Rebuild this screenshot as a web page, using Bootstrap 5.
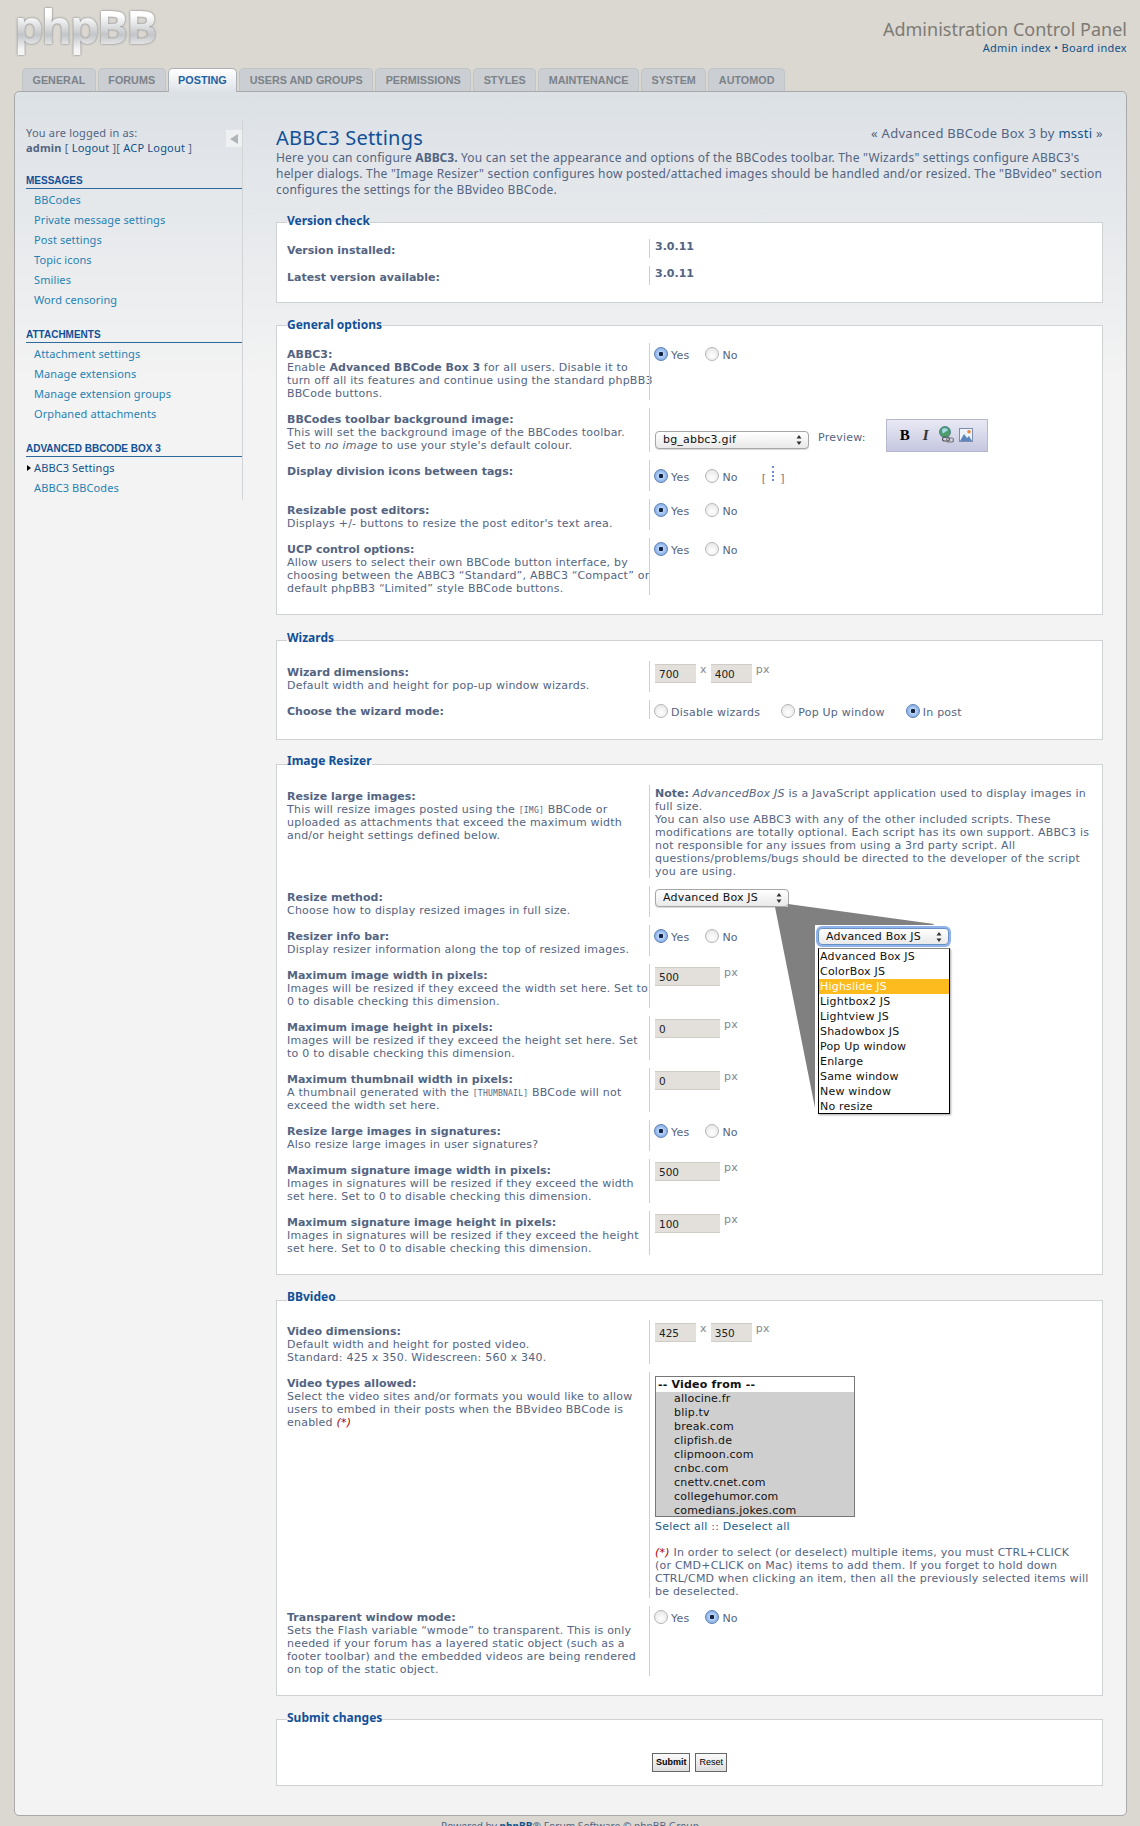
<!DOCTYPE html>
<html lang="en">
<head>
    <meta charset="UTF-8">
    <title>ABBC3 Settings</title>
    <link href="https://cdn.jsdelivr.net/npm/bootstrap@5.3.0/dist/css/bootstrap.min.css" rel="stylesheet">
    <style>
        html, body { height: 1826px; overflow: hidden; }
        body { position: relative; margin: 0; background: #dbd7d1; color: #536482; font: 11px/13px "Noto Sans", sans-serif; }
        a { color: #1f82b5; text-decoration: none; }

        /* header */
        .top-bar { height: 68px; padding: 0 13px 0 14px; }
        .logo-text { font: 700 47px/52px "Open Sans", sans-serif; letter-spacing: -2.5px; height: 60px; margin: 0; padding: 0 3px 8px 0; background: linear-gradient(#ffffff 25%, #c3c6c9 58%, #f4f4f4 82%); -webkit-background-clip: text; background-clip: text; color: transparent; filter: drop-shadow(0 0 1px #77797b); }
        .acp-title { font: 18px/22px "Noto Sans", sans-serif; color: #7d7b74; margin-top: 18px; }
        .acp-links { font-size: 11px; line-height: 15px; color: #105289; letter-spacing: .3px; }
        .acp-links a { color: #105289; }

        /* tabs */
        .acp-tabs { padding-left: 22px; height: 24px; gap: 2px; position: relative; z-index: 2; flex-wrap: nowrap; }
        .acp-tabs .nav-link { height: 23px; padding: 0 9.5px; font: 700 10.8px/23px "Liberation Sans", sans-serif; color: #7c8288; background: #cbcfd3; border: 1px solid #c0c4c7; border-bottom: 0; border-radius: 5px 5px 0 0; white-space: nowrap; }
        .acp-tabs .nav-link.active { height: 24px; background: #dde2e7; border-color: #aab0b5; color: #1d62a3; border-bottom: 0; background-image: linear-gradient(#fff, #dde2e7); }

        /* panel */
        .acp-panel { display: flex; height: 1725px; margin: -1px 13px 0 14px; background: linear-gradient(#dce1e6, #f3f3f3 290px); border: 1px solid #a9a9a9; border-radius: 5px; }
        .side-col { width: 228px; height: 380px; margin-top: 28px; padding: 0 0 0 11px; border-right: 1px solid #d2d4d6; position: relative; flex: none; }
        .side-who { margin-top: 5px; line-height: 15px; color: #536482; margin-bottom: 19px; letter-spacing: .2px; }
        .side-who b { font-weight: 700; }
        .side-who a { color: #105289; }
        .collapse-btn { position: absolute; right: 0; top: 10px; width: 16px; height: 17px; background: #eef0f2; display: flex; align-items: center; justify-content: center; }
        .collapse-btn i { border: 5px solid transparent; border-left: 0; border-right: 8px solid #aeb4ba; }
        .side-head { font: 700 10px/14px "Liberation Sans", sans-serif; color: #115098; text-transform: uppercase; border-bottom: 1px solid #2c6a9e; margin: 0; height: 15px; }
        .side-menu { margin: 0 0 18px; padding: 1px 0 0 0; letter-spacing: .1px; }
        .side-menu li { height: 20px; line-height: 20px; padding-left: 8px; position: relative; }
        .side-menu li.here a { color: #105289; }
        .side-menu li.here::before { content: ""; position: absolute; left: 1px; top: 7px; border: 3px solid transparent; border-left: 4px solid #000; border-right: 0; }

        .main-col { width: 827px; margin-left: 33px; flex: none; }
        .main-head { margin-top: 34px; height: 21px; }
        .main-head h1 { font: 20px/24px "Noto Sans", sans-serif; color: #115098; margin: 0; letter-spacing: .2px; }
        .main-head span { font-size: 13px; line-height: 14px; letter-spacing: .28px; }
        .main-head span a { color: #105289; }
        .main-intro { font-size: 12px; line-height: 16px; margin: 3px 0 0; white-space: nowrap; letter-spacing: .22px; }
        .main-intro b { font-weight: 700; letter-spacing: 0; }

        /* fieldsets */
        fieldset.opts { display: block; margin: 0; min-width: 0; background: #fff; border: 1px solid #cfd2d5; padding: 10px 10px 11px; font: 11px/13px "DejaVu Sans", sans-serif; letter-spacing: .22px; }
        fieldset.opts legend { float: none; width: auto; margin: 0; padding: 0; font: 700 12px/14px "Noto Sans", sans-serif; color: #115098; position: relative; top: -3px; letter-spacing: 0; }
        fieldset.opts legend + * { clear: none; }
        #fs-version { margin-top: 17px; padding-bottom: 9px; }
        #fs-version legend { top: -1px; }
        #fs-general { margin-top: 15px; padding-top: 11px; }
        #fs-general legend { top: 0; }
        #fs-wizard { margin-top: 18px; padding-top: 14px; padding-bottom: 12px; }
        #fs-wizard legend { top: -2px; }
        #fs-resizer { margin-top: 17px; padding-top: 14px; }
        #fs-video { margin-top: 18px; padding-top: 13px; }
        #fs-submit { margin-top: 16px; height: 74px; }
        #fs-submit legend { top: -1px; }

        .opt-row { display: flex; margin-bottom: 8px; }
        .opt-label { width: 362px; flex: none; padding-top: 5px; white-space: nowrap; }
        .opt-label b { font-weight: 700; letter-spacing: 0; }
        .opt-val { border-left: 1px solid #ccd0d4; padding: 3px 0 0 5px; flex: 1; min-width: 0; position: relative; white-space: nowrap; color: #536482; }
        .h-19 { min-height: 19px; }
        .h-31 { min-height: 31px; }
        .h-18 { min-height: 18px; }
        .h-93 { min-height: 93px; }
        .h-226 { min-height: 226px; }
        .ver-txt { font-weight: 700; padding-top: 1px; letter-spacing: 0; }
        .note-txt { padding-top: 2px; }
        .note-txt b { font-weight: 700; letter-spacing: 0; }
        .val-low { padding-top: 6px; }
        .mono-small { font: 8px "DejaVu Sans Mono", monospace; }
        .req { color: #aa0000; font-style: italic; }

        /* controls */
        .rb-set { display: flex; align-items: center; gap: 3px; }
        .rb-set label { margin: 0 14px 0 0; padding-top: 3px; }
        .rb-wide label { margin-right: 19px; }
        input.rb { appearance: none; -webkit-appearance: none; width: 14px; height: 14px; margin: 0 0 0 -1px; border-radius: 50%; border: 1px solid #b5b5b5; background: radial-gradient(circle at 50% 65%, #fff, #e2e2e2); flex: none; }
        input.rb:checked { border-color: #5d7fb5; background: radial-gradient(circle, #14233f 0 2px, #b9d3f5 2.5px, #7ba7e6 7px); }
        .mac-select { appearance: none; -webkit-appearance: none; display: block; height: 18px; padding: 0 0 0 7px; font: 11px/16px "DejaVu Sans", sans-serif; letter-spacing: .2px; color: #111; border: 1px solid #a6a6a6; border-radius: 4px; background-color: #fff; background-image: linear-gradient(#fff, #e9e9e9); box-shadow: 0 1px 1px rgba(0,0,0,.15); }
        .mac-arrows { position: absolute; right: 7px; top: 4px; width: 6px; height: 10px; pointer-events: none; }
        .sel-wrap { position: relative; display: inline-block; }
        .sel-abbc { width: 154px; }
        .sel-box { width: 134px; }
        .txt-in { height: 19px; background: #e3e0db; border: 0; border-top: 1px solid #cfccc6; border-bottom: 1px solid #cfccc6; font: 10.5px/17px "DejaVu Sans", sans-serif; color: #222; padding: 1px 0 0 4px; }
        .w-41 { width: 41px; }
        .w-65 { width: 65px; }
        .unit-txt { color: #808890; margin-left: 4px; line-height: 11px; align-self: flex-start; }
        .cross-txt { color: #808890; margin: 0 4px; line-height: 11px; align-self: flex-start; }
        .tool-shift { margin-top: 20px; }
        .tool-label { margin: 20px 0 0 9px; }
        .tool-preview { width: 102px; height: 33px; flex: none; margin: 8px 0 0 20px; background: linear-gradient(#e9e9f4, #c5c7e0); border: 1px solid #b6b9cc; display: flex; align-items: center; gap: 5px; padding: 0 0 2px 13px; }
        .tool-b { font: 700 15px/14px "Liberation Serif", serif; color: #000; width: 13px; }
        .tool-i { font: italic 700 15px/14px "Liberation Serif", serif; color: #333; width: 9px; margin: 0 1.5px 0 5px; }
        .div-mark { margin-left: 7px; color: #777; display: flex; gap: 6px; align-items: flex-end; }
        .div-mark i { display: block; width: 0; height: 15px; border-left: 2px dotted #6c8fd6; margin-bottom: 4px; }

        .video-list { width: 200px; height: 141px; margin: 1px 0 3px; border: 1px solid #777; background: #cfcfcf; overflow: hidden; font: 11px/14px "DejaVu Sans", sans-serif; letter-spacing: .2px; color: #111; padding: 0; list-style: none; }
        .video-list li { padding-left: 18px; }
        .video-list li.grp { background: #fff; font-weight: 700; padding: 1px 0 0 2px; height: 15px; }
        .sel-links { color: #536482; margin-bottom: 13px; }
        .sel-links a { color: #1a5f8f; }

        .submit-row { margin-top: 17px; gap: 5px; }
        .btn-acp { font: 700 9px/17px "Liberation Sans", sans-serif; color: #000; background: linear-gradient(#fafafa, #dedede); border: 1px solid #666; border-radius: 0; padding: 0 3px; height: 19px; letter-spacing: 0; }
        .btn-acp.thin { font-weight: 400; }

        /* popup */
        .cone-svg { position: absolute; left: 0; top: 0; width: 1140px; height: 1826px; z-index: 3; pointer-events: none; }
        .pop-box { position: absolute; left: 815px; top: 925px; width: 137px; height: 190px; background: #fff; z-index: 4; padding: 3px; }
        .pop-sel { width: 131px; box-shadow: 0 0 0 2px #8fb4ea; border-color: #6a8fc5; height: 17px; }
        .pop-list { list-style: none; margin: 3px 0 0; padding: 0; width: 132px; height: 166px; background: #fff; border: 1px solid #000; border-top-color: #888; box-shadow: 1px 1px 2px rgba(0,0,0,.35); font: 11px/15px "DejaVu Sans", sans-serif; letter-spacing: .2px; color: #111; }
        .pop-list li { height: 15px; padding-left: 1px; white-space: nowrap; }
        .pop-list li.on { background: #fdbb1e; color: #fff; }

        .foot-note { text-align: center; line-height: 13px; margin-top: 4px; font-size: 10.2px; }
        .foot-note a { color: #105289; font-weight: 700; }
    </style>
</head>
<body>
    <div class="top-bar d-flex justify-content-between">
        <div class="logo-text">phpBB</div>
        <div class="text-end">
            <div class="acp-title">Administration Control Panel</div>
            <div class="acp-links"><a href="#">Admin index</a> &bull; <a href="#">Board index</a></div>
        </div>
    </div>

    <ul class="nav acp-tabs">
        <li class="nav-item"><a class="nav-link" href="#">GENERAL</a></li>
        <li class="nav-item"><a class="nav-link" href="#">FORUMS</a></li>
        <li class="nav-item"><a class="nav-link active" href="#">POSTING</a></li>
        <li class="nav-item"><a class="nav-link" href="#">USERS AND GROUPS</a></li>
        <li class="nav-item"><a class="nav-link" href="#">PERMISSIONS</a></li>
        <li class="nav-item"><a class="nav-link" href="#">STYLES</a></li>
        <li class="nav-item"><a class="nav-link" href="#">MAINTENANCE</a></li>
        <li class="nav-item"><a class="nav-link" href="#">SYSTEM</a></li>
        <li class="nav-item"><a class="nav-link" href="#">AUTOMOD</a></li>
    </ul>

    <div class="acp-panel">
        <div class="side-col">
            <span class="collapse-btn"><i></i></span>
            <div class="side-who">You are logged in as:<br><b>admin</b> [ <a href="#">Logout</a> ][ <a href="#">ACP Logout</a> ]</div>
            <h2 class="side-head">Messages</h2>
            <ul class="side-menu list-unstyled">
                <li><a href="#">BBCodes</a></li>
                <li><a href="#">Private message settings</a></li>
                <li><a href="#">Post settings</a></li>
                <li><a href="#">Topic icons</a></li>
                <li><a href="#">Smilies</a></li>
                <li><a href="#">Word censoring</a></li>
            </ul>
            <h2 class="side-head">Attachments</h2>
            <ul class="side-menu list-unstyled">
                <li><a href="#">Attachment settings</a></li>
                <li><a href="#">Manage extensions</a></li>
                <li><a href="#">Manage extension groups</a></li>
                <li><a href="#">Orphaned attachments</a></li>
            </ul>
            <h2 class="side-head">Advanced BBCode Box 3</h2>
            <ul class="side-menu list-unstyled">
                <li class="here"><a href="#">ABBC3 Settings</a></li>
                <li><a href="#">ABBC3 BBCodes</a></li>
            </ul>
        </div>

        <div class="main-col">
            <div class="main-head d-flex justify-content-between">
                <h1>ABBC3 Settings</h1>
                <span>&laquo; Advanced BBCode Box 3 by <a href="#">mssti</a> &raquo;</span>
            </div>
            <p class="main-intro">Here you can configure <b>ABBC3.</b> You can set the appearance and options of the BBCodes toolbar. The "Wizards" settings configure ABBC3's<br>helper dialogs. The "Image Resizer" section configures how posted/attached images should be handled and/or resized. The "BBvideo" section<br>configures the settings for the BBvideo BBCode.</p>

            <fieldset class="opts" id="fs-version">
                <legend>Version check</legend>
                <div class="opt-row h-19"><div class="opt-label"><b>Version installed:</b></div><div class="opt-val ver-txt">3.0.11</div></div>
                <div class="opt-row h-19"><div class="opt-label"><b>Latest version available:</b></div><div class="opt-val ver-txt">3.0.11</div></div>
            </fieldset>

            <fieldset class="opts" id="fs-general">
                <legend>General options</legend>
                <div class="opt-row">
                    <div class="opt-label"><b>ABBC3:</b><br>Enable <b>Advanced BBCode Box 3</b> for all users. Disable it to<br>turn off all its features and continue using the standard phpBB3<br>BBCode buttons.</div>
                    <div class="opt-val"><div class="rb-set"><input class="rb" type="radio" name="a1" checked><label>Yes</label><input class="rb" type="radio" name="a1"><label>No</label></div></div>
                </div>
                <div class="opt-row">
                    <div class="opt-label"><b>BBCodes toolbar background image:</b><br>This will set the background image of the BBCodes toolbar.<br>Set to <i>no image</i> to use your style's default colour.</div>
                    <div class="opt-val d-flex align-items-start">
                        <span class="sel-wrap tool-shift"><select class="mac-select sel-abbc"><option>bg_abbc3.gif</option></select><svg class="mac-arrows" viewBox="0 0 6 10"><path d="M3 0l2.5 3.5h-5zM3 10L.5 6.5h5z" fill="#333"/></svg></span>
                        <span class="tool-label">Preview:</span>
                        <div class="tool-preview">
                            <span class="tool-b">B</span><span class="tool-i">I</span>
                            <svg width="16" height="17" viewBox="0 0 16 17"><circle cx="7" cy="6" r="5.5" fill="#4f9d68" stroke="#2e6d8c" stroke-width=".7"/><path d="M4 3c2-1 5-1 6 1-1 2-3 1-4 3-1 1-2 0-2-4z" fill="#a6d8e8"/><rect x="4.5" y="11" width="7" height="4" rx="2" fill="none" stroke="#555" stroke-width="1.1"/><rect x="8.5" y="12" width="7" height="4" rx="2" fill="none" stroke="#777" stroke-width="1.1"/></svg>
                            <svg width="14" height="14" viewBox="0 0 14 14"><rect x=".5" y=".5" width="13" height="13" fill="#eef3fa" stroke="#7d8db0"/><circle cx="10" cy="3.8" r="1.8" fill="#e88a3a"/><path d="M1 13l4-7 3 4 2-2 3 5z" fill="#5c84bd"/></svg>
                        </div>
                    </div>
                </div>
                <div class="opt-row h-31">
                    <div class="opt-label"><b>Display division icons between tags:</b></div>
                    <div class="opt-val val-low"><div class="rb-set"><input class="rb" type="radio" name="a2" checked><label>Yes</label><input class="rb" type="radio" name="a2"><label>No</label><span class="div-mark">[<i></i>]</span></div></div>
                </div>
                <div class="opt-row">
                    <div class="opt-label"><b>Resizable post editors:</b><br>Displays +/- buttons to resize the post editor's text area.</div>
                    <div class="opt-val"><div class="rb-set"><input class="rb" type="radio" name="a3" checked><label>Yes</label><input class="rb" type="radio" name="a3"><label>No</label></div></div>
                </div>
                <div class="opt-row">
                    <div class="opt-label"><b>UCP control options:</b><br>Allow users to select their own BBCode button interface, by<br>choosing between the ABBC3 &ldquo;Standard&rdquo;, ABBC3 &ldquo;Compact&rdquo; or<br>default phpBB3 &ldquo;Limited&rdquo; style BBCode buttons.</div>
                    <div class="opt-val"><div class="rb-set"><input class="rb" type="radio" name="a4" checked><label>Yes</label><input class="rb" type="radio" name="a4"><label>No</label></div></div>
                </div>
            </fieldset>

            <fieldset class="opts" id="fs-wizard">
                <legend>Wizards</legend>
                <div class="opt-row">
                    <div class="opt-label"><b>Wizard dimensions:</b><br>Default width and height for pop-up window wizards.</div>
                    <div class="opt-val d-flex"><input class="txt-in w-41" value="700"><span class="cross-txt">x</span><input class="txt-in w-41" value="400"><span class="unit-txt">px</span></div>
                </div>
                <div class="opt-row h-18">
                    <div class="opt-label"><b>Choose the wizard mode:</b></div>
                    <div class="opt-val"><div class="rb-set rb-wide"><input class="rb" type="radio" name="a5"><label>Disable wizards</label><input class="rb" type="radio" name="a5"><label>Pop Up window</label><input class="rb" type="radio" name="a5" checked><label>In post</label></div></div>
                </div>
            </fieldset>

            <fieldset class="opts" id="fs-resizer">
                <legend>Image Resizer</legend>
                <div class="opt-row h-93">
                    <div class="opt-label"><b>Resize large images:</b><br>This will resize images posted using the <span class="mono-small">[IMG]</span> BBCode or<br>uploaded as attachments that exceed the maximum width<br>and/or height settings defined below.</div>
                    <div class="opt-val note-txt"><b>Note:</b> <i>AdvancedBox JS</i> is a JavaScript application used to display images in<br>full size.<br>You can also use ABBC3 with any of the other included scripts. These<br>modifications are totally optional. Each script has its own support. ABBC3 is<br>not responsible for any issues from using a 3rd party script. All<br>questions/problems/bugs should be directed to the developer of the script<br>you are using.</div>
                </div>
                <div class="opt-row">
                    <div class="opt-label"><b>Resize method:</b><br>Choose how to display resized images in full size.</div>
                    <div class="opt-val"><span class="sel-wrap"><select class="mac-select sel-box"><option>Advanced Box JS</option></select><svg class="mac-arrows" viewBox="0 0 6 10"><path d="M3 0l2.5 3.5h-5zM3 10L.5 6.5h5z" fill="#333"/></svg></span></div>
                </div>
                <div class="opt-row">
                    <div class="opt-label"><b>Resizer info bar:</b><br>Display resizer information along the top of resized images.</div>
                    <div class="opt-val"><div class="rb-set"><input class="rb" type="radio" name="a6" checked><label>Yes</label><input class="rb" type="radio" name="a6"><label>No</label></div></div>
                </div>
                <div class="opt-row">
                    <div class="opt-label"><b>Maximum image width in pixels:</b><br>Images will be resized if they exceed the width set here. Set to<br>0 to disable checking this dimension.</div>
                    <div class="opt-val d-flex"><input class="txt-in w-65" value="500"><span class="unit-txt">px</span></div>
                </div>
                <div class="opt-row">
                    <div class="opt-label"><b>Maximum image height in pixels:</b><br>Images will be resized if they exceed the height set here. Set<br>to 0 to disable checking this dimension.</div>
                    <div class="opt-val d-flex"><input class="txt-in w-65" value="0"><span class="unit-txt">px</span></div>
                </div>
                <div class="opt-row">
                    <div class="opt-label"><b>Maximum thumbnail width in pixels:</b><br>A thumbnail generated with the <span class="mono-small">[THUMBNAIL]</span> BBCode will not<br>exceed the width set here.</div>
                    <div class="opt-val d-flex"><input class="txt-in w-65" value="0"><span class="unit-txt">px</span></div>
                </div>
                <div class="opt-row">
                    <div class="opt-label"><b>Resize large images in signatures:</b><br>Also resize large images in user signatures?</div>
                    <div class="opt-val"><div class="rb-set"><input class="rb" type="radio" name="a7" checked><label>Yes</label><input class="rb" type="radio" name="a7"><label>No</label></div></div>
                </div>
                <div class="opt-row">
                    <div class="opt-label"><b>Maximum signature image width in pixels:</b><br>Images in signatures will be resized if they exceed the width<br>set here. Set to 0 to disable checking this dimension.</div>
                    <div class="opt-val d-flex"><input class="txt-in w-65" value="500"><span class="unit-txt">px</span></div>
                </div>
                <div class="opt-row">
                    <div class="opt-label"><b>Maximum signature image height in pixels:</b><br>Images in signatures will be resized if they exceed the height<br>set here. Set to 0 to disable checking this dimension.</div>
                    <div class="opt-val d-flex"><input class="txt-in w-65" value="100"><span class="unit-txt">px</span></div>
                </div>
            </fieldset>

            <fieldset class="opts" id="fs-video">
                <legend>BBvideo</legend>
                <div class="opt-row">
                    <div class="opt-label"><b>Video dimensions:</b><br>Default width and height for posted video.<br>Standard: 425 x 350. Widescreen: 560 x 340.</div>
                    <div class="opt-val d-flex"><input class="txt-in w-41" value="425"><span class="cross-txt">x</span><input class="txt-in w-41" value="350"><span class="unit-txt">px</span></div>
                </div>
                <div class="opt-row h-226">
                    <div class="opt-label"><b>Video types allowed:</b><br>Select the video sites and/or formats you would like to allow<br>users to embed in their posts when the BBvideo BBCode is<br>enabled <span class="req">(*)</span></div>
                    <div class="opt-val">
                        <ul class="video-list">
                            <li class="grp">-- Video from --</li>
                            <li>allocine.fr</li>
                            <li>blip.tv</li>
                            <li>break.com</li>
                            <li>clipfish.de</li>
                            <li>clipmoon.com</li>
                            <li>cnbc.com</li>
                            <li>cnettv.cnet.com</li>
                            <li>collegehumor.com</li>
                            <li>comedians.jokes.com</li>
                        </ul>
                        <div class="sel-links"><a href="#">Select all</a> :: <a href="#">Deselect all</a></div>
                        <div><span class="req">(*)</span> In order to select (or deselect) multiple items, you must CTRL+CLICK<br>(or CMD+CLICK on Mac) items to add them. If you forget to hold down<br>CTRL/CMD when clicking an item, then all the previously selected items will<br>be deselected.</div>
                    </div>
                </div>
                <div class="opt-row">
                    <div class="opt-label"><b>Transparent window mode:</b><br>Sets the Flash variable &ldquo;wmode&rdquo; to transparent. This is only<br>needed if your forum has a layered static object (such as a<br>footer toolbar) and the embedded videos are being rendered<br>on top of the static object.</div>
                    <div class="opt-val"><div class="rb-set"><input class="rb" type="radio" name="a8"><label>Yes</label><input class="rb" type="radio" name="a8" checked><label>No</label></div></div>
                </div>
            </fieldset>

            <fieldset class="opts" id="fs-submit">
                <legend>Submit changes</legend>
                <div class="submit-row d-flex justify-content-center">
                    <button class="btn btn-acp" type="button">Submit</button>
                    <button class="btn btn-acp thin" type="button">Reset</button>
                </div>
            </fieldset>
        </div>
    </div>

    <div class="foot-note">Powered by <a href="#">phpBB</a>&reg; Forum Software &copy; phpBB Group</div>

    <svg class="cone-svg" viewBox="0 0 1140 1826"><polygon points="775,907 788,907 788,904 934,924 815,1108" fill="#808080"/></svg>
    <div class="pop-box">
        <span class="sel-wrap"><select class="mac-select pop-sel"><option>Advanced Box JS</option></select><svg class="mac-arrows" viewBox="0 0 6 10"><path d="M3 0l2.5 3.5h-5zM3 10L.5 6.5h5z" fill="#333"/></svg></span>
        <ul class="pop-list">
            <li>Advanced Box JS</li>
            <li>ColorBox JS</li>
            <li class="on">Highslide JS</li>
            <li>Lightbox2 JS</li>
            <li>Lightview JS</li>
            <li>Shadowbox JS</li>
            <li>Pop Up window</li>
            <li>Enlarge</li>
            <li>Same window</li>
            <li>New window</li>
            <li>No resize</li>
        </ul>
    </div>

    <script src="https://cdn.jsdelivr.net/npm/bootstrap@5.3.0/dist/js/bootstrap.bundle.min.js"></script>
</body>
</html>
